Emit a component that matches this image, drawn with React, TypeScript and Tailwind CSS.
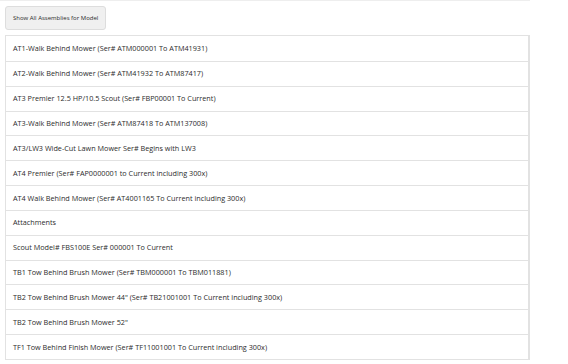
import React from "react";

const assemblies = [
  "AT1-Walk Behind Mower (Ser# ATM000001 To ATM41931)",
  "AT2-Walk Behind Mower (Ser# ATM41932 To ATM87417)",
  "AT3 Premier 12.5 HP/10.5 Scout (Ser# FBP00001 To Current)",
  "AT3-Walk Behind Mower (Ser# ATM87418 To ATM137008)",
  "AT3/LW3 Wide-Cut Lawn Mower Ser# Begins with LW3",
  "AT4 Premier (Ser# FAP0000001 to Current including 300x)",
  "AT4 Walk Behind Mower (Ser# AT4001165 To Current including 300x)",
  "Attachments",
  "Scout Model# FBS100E Ser# 000001 To Current",
  "TB1 Tow Behind Brush Mower (Ser# TBM000001 To TBM011881)",
  'TB2 Tow Behind Brush Mower 44" (Ser# TB21001001 To Current including 300x)',
  'TB2 Tow Behind Brush Mower 52"',
  "TF1 Tow Behind Finish Mower (Ser# TF11001001 To Current including 300x)",
];

const App = () => {
  return (
    <div className="w-[568px] h-[364px] bg-white overflow-hidden font-['Open_Sans',sans-serif] text-[#2b2b2b]">
      <div className="w-[530px] h-px bg-[#eeeeee]" />
      <div className="flex flex-col items-start px-[5px] pt-[5px]">
        <button className="h-[24px] px-[7px] bg-[#f0f0f0] border border-[#dddddd] rounded-[3px] text-[6px] text-[#2b2b2b] leading-none">
          Show All Assemblies for Model
        </button>
        <ul className="mt-[5px] w-[525px] border border-[#e2e2e2] border-r-2">
          {assemblies.map((a, i) => (
            <li
              key={a}
              className={
                "h-[24.85px] flex items-center px-[7px] text-[7.25px] " +
                (i > 0 ? "border-t border-[#e2e2e2]" : "")
              }
            >
              {a}
            </li>
          ))}
        </ul>
      </div>
    </div>
  );
};

export default App;
